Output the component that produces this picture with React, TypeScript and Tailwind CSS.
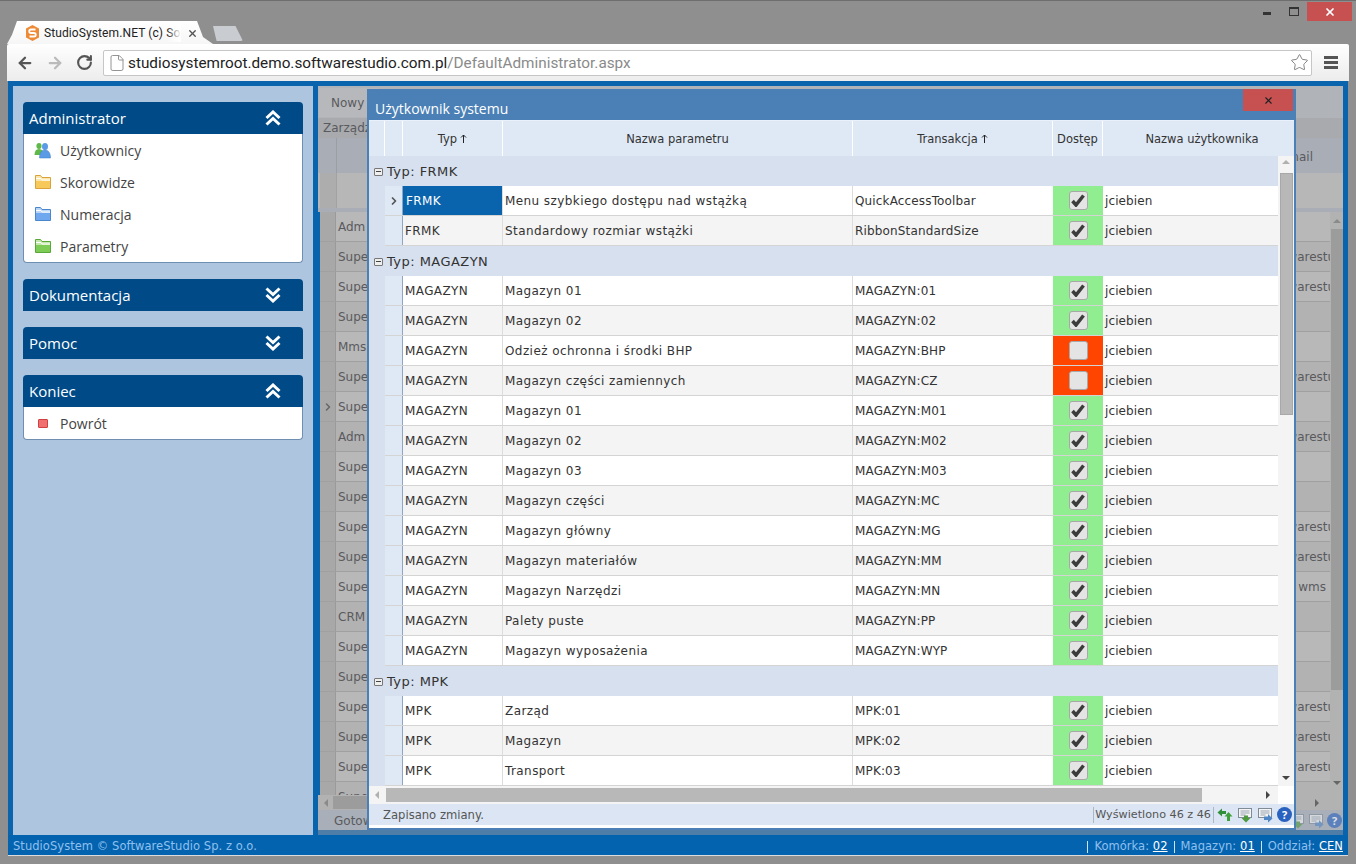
import { ArrowLeft, ArrowRight, ChevronRight, File, RotateCw, Star, X } from 'lucide-react';

const mono = "font-['DejaVu_Sans',sans-serif]";
const ui = "font-['Open_Sans',sans-serif]";
const chrome = "font-['Roboto',sans-serif]";

type Row = [string, string, string, boolean];

const groups: { name: string; rows: Row[] }[] = [
  {
    name: 'FRMK',
    rows: [
      ['FRMK', 'Menu szybkiego dostępu nad wstążką', 'QuickAccessToolbar', true],
      ['FRMK', 'Standardowy rozmiar wstążki', 'RibbonStandardSize', true],
    ],
  },
  {
    name: 'MAGAZYN',
    rows: [
      ['MAGAZYN', 'Magazyn 01', 'MAGAZYN:01', true],
      ['MAGAZYN', 'Magazyn 02', 'MAGAZYN:02', true],
      ['MAGAZYN', 'Odzież ochronna i środki BHP', 'MAGAZYN:BHP', false],
      ['MAGAZYN', 'Magazyn części zamiennych', 'MAGAZYN:CZ', false],
      ['MAGAZYN', 'Magazyn 01', 'MAGAZYN:M01', true],
      ['MAGAZYN', 'Magazyn 02', 'MAGAZYN:M02', true],
      ['MAGAZYN', 'Magazyn 03', 'MAGAZYN:M03', true],
      ['MAGAZYN', 'Magazyn części', 'MAGAZYN:MC', true],
      ['MAGAZYN', 'Magazyn główny', 'MAGAZYN:MG', true],
      ['MAGAZYN', 'Magazyn materiałów', 'MAGAZYN:MM', true],
      ['MAGAZYN', 'Magazyn Narzędzi', 'MAGAZYN:MN', true],
      ['MAGAZYN', 'Palety puste', 'MAGAZYN:PP', true],
      ['MAGAZYN', 'Magazyn wyposażenia', 'MAGAZYN:WYP', true],
    ],
  },
  {
    name: 'MPK',
    rows: [
      ['MPK', 'Zarząd', 'MPK:01', true],
      ['MPK', 'Magazyn', 'MPK:02', true],
      ['MPK', 'Transport', 'MPK:03', true],
    ],
  },
];

// rows of the dimmed list behind the dialog: left text, right text
const backRows: [string, string][] = [
  ['Adm', ''],
  ['Supe', 'softwarestudio'],
  ['Supe', 'softwarestudio'],
  ['Supe', ''],
  ['Mms', ''],
  ['Supe', 'softwarestudio'],
  ['Supe', ''],
  ['Adm', 'softwarestudio'],
  ['Supe', ''],
  ['Supe', ''],
  ['Supe', 'softwarestudio'],
  ['Supe', 'softwarestudio'],
  ['Supe', 'wms'],
  ['CRM', ''],
  ['Supe', ''],
  ['Supe', ''],
  ['Supe', 'softwarestudio'],
  ['Supe', 'softwarestudio'],
  ['Supe', 'softwarestudio'],
  ['Supe', ''],
];

function FolderIcon({ fill, light, stroke }: { fill: string; light: string; stroke: string }) {
  return (
    <svg width="16" height="14" viewBox="0 0 16 14" className="shrink-0">
      <path d="M0.5 13.500V0.500h5l1.500 2h8.500v11z" fill={light} stroke={stroke} />
      <path d="M1 3.500h5l1 1.500h8" fill="none" stroke="#ffffff" />
      <rect x="1" y="6" width="14" height="7" fill={fill} />
    </svg>
  );
}

function UsersIcon() {
  return (
    <svg width="17" height="17" viewBox="0 0 17 17" className="shrink-0">
      <ellipse cx="5" cy="4" rx="2.600" ry="3" fill="#5fb84a" />
      <path d="M0.500 13c0-4 1.500-6 4.500-6s4.500 2 4.500 6z" fill="#5fb84a" />
      <ellipse cx="11" cy="4.500" rx="3" ry="3.500" fill="#5b9be6" />
      <path d="M5.500 16c0-5 2-8 5.500-8s5.500 3 5.500 8z" fill="#5b9be6" stroke="#3e7cc8" strokeWidth="0.500" />
    </svg>
  );
}

function RefreshIcon() {
  return (
    <svg width="16" height="16" viewBox="0 0 16 16" className="shrink-0">
      <path d="M0.500 5.500L5 1.500v2.500h4v3H5v2.500z" fill="#2f8f3a" />
      <path d="M11.500 5l4 4.500H13V14h-3V9.500H7.500z" fill="#3f9f3a" />
    </svg>
  );
}

function PageDownIcon() {
  return (
    <svg width="16" height="16" viewBox="0 0 16 16" className="shrink-0">
      <rect x="1.500" y="1.500" width="13" height="9" fill="#f4f4f4" stroke="#7f8b96" />
      <path d="M3.500 4h9M3.500 6h9M3.500 8h5" stroke="#9aa5b1" />
      <path d="M7 8.500h4v2.500h2.500L9 15.500 4.500 11H7z" fill="#4f9a3f" />
    </svg>
  );
}

function PageRightIcon() {
  return (
    <svg width="16" height="16" viewBox="0 0 16 16" className="shrink-0">
      <rect x="1.500" y="1.500" width="13" height="9" fill="#f4f4f4" stroke="#7f8b96" />
      <path d="M3.500 4h9M3.500 6h9M3.500 8h5" stroke="#9aa5b1" />
      <path d="M7 9.500h4V7l4.500 4.500L11 15.500V13H7z" fill="#4f86c6" />
    </svg>
  );
}

function HelpIcon() {
  return (
    <div className={`flex h-[15px] w-[15px] shrink-0 items-center justify-center rounded-full bg-[#2a62c0] text-[11px] font-bold leading-none text-white ${ui}`}>
      ?
    </div>
  );
}

function DoubleChevron({ up }: { up: boolean }) {
  return (
    <svg width="16" height="16" viewBox="0 0 16 16" className={up ? '' : 'rotate-180'}>
      <path d="M1.500 8L8 2l6.500 6M1.500 14.500L8 8.500l6.500 6" fill="none" stroke="#ffffff" strokeWidth="3" />
    </svg>
  );
}

function Checkbox({ on }: { on: boolean }) {
  return (
    <div className="flex h-[19px] w-[19px] items-center justify-center rounded-[3px] border border-[#a8a8a8] bg-[#e4e4e4]">
      {on && (
        <svg width="14" height="13" viewBox="0 0 14 13">
          <path d="M1.500 7l3.500 4L12.500 1.500" fill="none" stroke="#3c3c3c" strokeWidth="3.500" />
        </svg>
      )}
    </div>
  );
}

function SidePanel({ title, open, children }: { title: string; open: boolean; children?: React.ReactNode }) {
  return (
    <div className="w-[280px]">
      <div className={`flex h-8 items-center justify-between rounded-t-[4px] bg-[#004b87] pl-[6px] pr-[22px] text-[15px] text-white ${ui}`}>
        <span className="pt-[1px]">{title}</span>
        <DoubleChevron up={open} />
      </div>
      {children && (
        <div className="rounded-b-[4px] border border-t-0 border-[#6f8fb0] bg-white">{children}</div>
      )}
    </div>
  );
}

function SideItem({ icon, label }: { icon: React.ReactNode; label: string }) {
  return (
    <div className={`flex h-8 items-center text-[14px] text-[#444] ${ui}`}>
      <div className="flex w-[36px] justify-center pl-[1px]">{icon}</div>
      <span>{label}</span>
    </div>
  );
}

function TabBar() {
  return (
    <div className="relative flex h-[43px] shrink-0 items-end pl-[7px]">
      <div className="relative flex h-[23px] w-[206px] items-center bg-gradient-to-b from-white to-[#f6f6f6] pl-[19px] pt-[1px] [clip-path:polygon(0_100%,5px_60%,10px_0,calc(100%-16px)_0,calc(100%-10px)_70%,100%_100%)]">
        <svg width="13" height="16" viewBox="0 0 13 16" className="shrink-0">
          <path d="M6.500 0L13 3.500v9L6.500 16 0 12.500v-9z" fill="#ee8a35" />
          <path d="M9.500 4.500H5a1.700 1.700 0 0 0 0 3.500h3a1.700 1.700 0 0 1 0 3.500H3.500" fill="none" stroke="#ffffff" strokeWidth="1.800" />
        </svg>
        <div className={`relative ml-[5px] w-[137px] overflow-hidden whitespace-nowrap text-[12px] tracking-[0.1px] text-[#222] ${chrome}`}>
          StudioSystem.NET (c) Software
          <div className="absolute inset-y-0 right-0 w-[14px] bg-gradient-to-r from-transparent to-white" />
        </div>
        <X size={11} strokeWidth={3} className="ml-[6px] text-[#555]" />
      </div>
      <div className="mb-[3px] h-[15px] w-[30px] rounded-b-[2px] bg-[#c9ccd0] [clip-path:polygon(0_0,75%_0,100%_100%,12%_100%)]" />
      {/* window buttons */}
      <div className="absolute right-[4px] top-[1px] flex items-start">
        <div className="mr-[18px] mt-[10px] h-[3px] w-[8px] bg-[#333]" />
        <div className="mr-[8px] mt-[5px] h-[9px] w-[10px] border border-t-2 border-[#333]" />
        <div className="flex h-[19px] w-[45px] items-center justify-center bg-[#c75050] text-white">
          <X size={12} strokeWidth={3.500} />
        </div>
      </div>
    </div>
  );
}

function Toolbar() {
  return (
    <div className="mx-[7px] flex h-[37px] shrink-0 items-center rounded-t-[2px] bg-gradient-to-b from-white to-[#ececec]">
      <ArrowLeft size={18} strokeWidth={3} className="ml-[9px] text-[#555]" />
      <ArrowRight size={18} strokeWidth={3} className="ml-[12px] text-[#bbb]" />
      <RotateCw size={17} strokeWidth={3} className="ml-[12px] text-[#555]" />
      <div className="ml-[10px] flex h-[26px] w-[1209px] items-center rounded-[2px] border border-[#c6c6c6] bg-white pl-[4px] pr-[2px]">
        <File size={18} strokeWidth={1.200} className="text-[#888]" />
        <div className={`ml-[2px] flex-1 pt-[1px] text-[15.300px] text-[#222] ${chrome}`}>
          studiosystemroot.demo.softwarestudio.com.pl<span className="text-[#8a8a8a]">/DefaultAdministrator.aspx</span>
        </div>
        <Star size={19} strokeWidth={1} className="text-[#666]" />
      </div>
      <div className="ml-[12px] flex w-[14px] flex-col gap-[2px]">
        <div className="h-[3px] bg-[#555]" />
        <div className="h-[3px] bg-[#555]" />
        <div className="h-[3px] bg-[#555]" />
      </div>
    </div>
  );
}

function Sidebar() {
  return (
    <div className="flex w-[300px] shrink-0 flex-col items-center gap-4 bg-[#aec5e0] pt-4">
      <SidePanel title="Administrator" open>
        <SideItem icon={<UsersIcon />} label="Użytkownicy" />
        <SideItem icon={<FolderIcon fill="#f6c95a" light="#fbe6ad" stroke="#d9a33a" />} label="Skorowidze" />
        <SideItem icon={<FolderIcon fill="#6fa8ee" light="#bcd6f6" stroke="#4a86cc" />} label="Numeracja" />
        <SideItem icon={<FolderIcon fill="#7dcc55" light="#c3e8ab" stroke="#5aa838" />} label="Parametry" />
      </SidePanel>
      <SidePanel title="Dokumentacja" open={false} />
      <SidePanel title="Pomoc" open={false} />
      <SidePanel title="Koniec" open>
        <SideItem
          icon={<div className="h-[9px] w-[10px] rounded-[1px] border border-[#d04040] bg-[#f07070]" />}
          label="Powrót"
        />
      </SidePanel>
    </div>
  );
}

// the list page that sits dimmed behind the dialog
function BackPage() {
  return (
    <div className={`flex h-full flex-col text-[12px] text-[#5a5a5e] ${mono}`}>
      <div className="flex h-[32px] shrink-0 bg-[#b0b3b7] pl-[1px] pt-[2px]">
        <div className="flex h-[29px] w-[60px] items-center bg-[#b6b8bb] pl-[12px]">Nowy</div>
      </div>
      <div className="flex h-[20px] shrink-0 items-center bg-[#a8aaae] pb-[1px] pl-[5px]">Zarządzanie</div>
      <div className="flex h-[35px] shrink-0 items-center justify-between bg-[#a9aeb6] pl-[2px]">
        <div className="h-full w-[17px] border-r border-[#9a9ea5]" />
        <span className="mr-[30px] mt-[2px]">nail</span>
      </div>
      <div className="h-[35px] shrink-0 bg-[#b7b7b7] pl-[2px]">
        <div className="h-full w-[17px] border-r border-[#a2a2a2] bg-[#adadad]" />
      </div>
      <div className="h-[4px] shrink-0 bg-[#a9aeb6]" />
      <div className="flex min-h-0 flex-1">
        <div className="min-w-0 flex-1 overflow-hidden pl-[2px]">
          {backRows.map((row, i) => (
            <div key={i} className={`flex h-[30px] items-center border-b border-[#a0a0a0] ${i % 2 ? 'bg-[#b2b2b2]' : 'bg-[#b8b8b8]'}`}>
              <div className="relative flex h-full w-[16px] items-center justify-center border-r border-[#9a9a9a] bg-[#a8a8a8]">
                {i === 6 && <ChevronRight size={12} strokeWidth={3} className="text-[#666]" />}
              </div>
              <span className="ml-[2px]">{row[0]}</span>
              <div className="ml-auto w-[70px] overflow-hidden whitespace-nowrap text-right">
                {row[1] === 'wms' && <span className="pr-[4px]">wms</span>}
                {row[1] !== 'wms' && row[1] && <span className="ml-[5px] block text-left">{row[1]}</span>}
              </div>
            </div>
          ))}
        </div>
        <div className="flex w-[13px] shrink-0 flex-col items-center bg-[#b2b2b2]">
          <div className="mt-[7px] h-0 w-0 border-x-[4px] border-b-[4px] border-x-transparent border-b-[#8a8a8a]" />
          <div className="mt-[6px] h-[461px] w-[12px] bg-[#9c9c9c]" />
          <div className="mt-auto mb-[10px] h-0 w-0 border-x-[4px] border-t-[4px] border-x-transparent border-t-[#666]" />
        </div>
      </div>
      <div className="flex h-[15px] shrink-0 items-center bg-[#b2b2b2] pl-[6px]">
        <div className="h-0 w-0 border-y-[4px] border-r-[4px] border-y-transparent border-r-[#8a8a8a]" />
        <div className="ml-[5px] h-[13px] w-[960px] bg-[#9c9c9c]" />
        <div className="ml-auto mr-[24px] h-0 w-0 border-y-[4px] border-l-[4px] border-y-transparent border-l-[#666]" />
      </div>
      <div className="flex h-[20px] shrink-0 items-center bg-[#a8afb8] pl-[16px] pt-[1px]">
        <span>Gotowy</span>
        <div className="ml-auto flex items-center gap-[3px] pr-[1px] opacity-60">
          <PageDownIcon />
          <PageRightIcon />
          <HelpIcon />
        </div>
      </div>
      <div className="h-[5px] shrink-0 bg-[#4e7da8]" />
    </div>
  );
}

function DataRow({ row, selected, alt }: { row: Row; selected: boolean; alt: boolean }) {
  return (
    <div className="flex h-[30px]">
      <div className="w-[16px] shrink-0 bg-[#d6e0ef]" />
      <div className={`flex flex-1 border-b border-[#d4d4d4] ${alt ? 'bg-[#f4f4f4]' : 'bg-white'}`}>
        <div className="flex w-[18px] shrink-0 items-center justify-center border-r border-[#8ea6c0] bg-[#dfe8f5]">
          {selected && <ChevronRight size={12} strokeWidth={3.500} className="text-[#555]" />}
        </div>
        <div className={`flex w-[100px] shrink-0 items-center border-r border-[#dcdcdc] tracking-[0.4px] ${selected ? 'bg-[#0a64ad] pl-[3px] text-white' : 'pl-[2px]'}`}>
          {row[0]}
        </div>
        <div className="flex w-[350px] shrink-0 items-center border-r border-[#dcdcdc] pl-[2px] tracking-[0.42px]">{row[1]}</div>
        <div className="flex w-[200px] shrink-0 items-center pl-[2px] tracking-[0.15px]">{row[2]}</div>
        <div className={`flex w-[50px] shrink-0 items-center justify-center ${row[3] ? 'bg-[#90ee90]' : 'bg-[#ff4500]'}`}>
          <Checkbox on={row[3]} />
        </div>
        <div className="flex flex-1 items-center pl-[2px] tracking-[0.1px]">jciebien</div>
      </div>
    </div>
  );
}

function HeaderCell({ w, label, sort }: { w: string; label?: string; sort?: boolean }) {
  return (
    <div className={`flex ${w} shrink-0 items-center justify-center border-r border-white pt-[3px]`}>
      {label}
      {sort && (
        <svg width="7" height="9" viewBox="0 0 7 9" className="mb-[3px] ml-[3px]">
          <path d="M3.500 9V1M1 3.500L3.500 1 6 3.500" fill="none" stroke="#222" />
        </svg>
      )}
    </div>
  );
}

function Dialog() {
  return (
    <div className={`absolute left-[49px] top-[3px] flex h-[741px] w-[929px] flex-col border-x-2 border-b-2 border-[#4a80b5] bg-white text-[12px] text-[#333] ${mono}`}>
      <div className={`relative flex h-[31px] shrink-0 items-end bg-[#4a80b5] pb-[1px] pl-[6px] text-[14px] text-white ${ui}`}>
        Użytkownik systemu
        <div className="absolute right-[1px] top-0 flex h-[22px] w-[50px] items-center justify-center bg-[#c75050] text-[#222]">
          <X size={11} strokeWidth={2.500} />
        </div>
      </div>
      <div className="flex h-[36px] shrink-0 border-t border-[#eaf1fa] bg-[#dfe9f6] text-[11.500px]">
        <HeaderCell w="w-[16px]" />
        <HeaderCell w="w-[18px]" />
        <HeaderCell w="w-[100px]" label="Typ" sort />
        <HeaderCell w="w-[350px]" label="Nazwa parametru" />
        <HeaderCell w="w-[200px]" label="Transakcja" sort />
        <HeaderCell w="w-[50px]" label="Dostęp" />
        <div className="flex flex-1 items-center justify-center pl-[7px] pt-[3px]">Nazwa użytkownika</div>
      </div>
      <div className="flex h-[630px] shrink-0 overflow-hidden">
        <div className="min-w-0 flex-1">
          {groups.map((g, gi) => (
            <div key={g.name}>
              <div className="flex h-[30px] items-center bg-[#d6e0ef] pl-[5px] pt-[1px] text-[13px] tracking-[0.45px] text-[#333]">
                <div className="flex h-[8px] w-[9px] items-center justify-center rounded-[1px] border border-[#777] bg-[#eee]">
                  <div className="h-[1px] w-[5px] bg-[#444]" />
                </div>
                <span className="ml-[4px]">Typ: {g.name}</span>
              </div>
              {g.rows.map((row, i) => (
                <DataRow key={row[2]} row={row} selected={gi === 0 && i === 0} alt={i % 2 === 1} />
              ))}
            </div>
          ))}
        </div>
        <div className="flex w-[16px] shrink-0 flex-col items-center bg-[#f4f4f4]">
          <div className="mt-[4px] h-0 w-0 border-x-[4px] border-b-[4px] border-x-transparent border-b-[#b0b0b0]" />
          <div className="mt-[9px] h-[242px] w-[13px] border border-[#a8a8a8] bg-[#b8b8b8]" />
          <div className="mt-auto mb-[6px] h-0 w-0 border-x-[4px] border-t-[4px] border-x-transparent border-t-[#444]" />
        </div>
      </div>
      <div className="flex h-[18px] shrink-0 items-center bg-[#f4f4f4] pl-[6px]">
        <div className="h-0 w-0 border-y-[4px] border-r-[4px] border-y-transparent border-r-[#b0b0b0]" />
        <div className="ml-[7px] h-[14px] w-[816px] bg-[#b8b8b8]" />
        <div className="ml-[64px] h-0 w-0 border-y-[4px] border-l-[4px] border-y-transparent border-l-[#444]" />
        <div className="ml-auto h-full w-[16px] bg-white" />
      </div>
      <div className="flex h-[21px] shrink-0 items-center bg-[#dbe5f3] pl-[14px] text-[11.600px] text-[#555]">
        <span className="pt-[2px]">Zapisano zmiany.</span>
        <div className="ml-auto flex h-full items-center pr-[2px]">
          <div className="h-[16px] border-l border-[#a9b7c7] pl-[1px] text-[11.200px]">Wyświetlono 46 z 46</div>
          <div className="ml-[2px] mr-[3px] h-[16px] border-l border-[#a9b7c7]" />
          <div className="flex items-center gap-[4px]">
            <RefreshIcon />
            <PageDownIcon />
            <PageRightIcon />
            <HelpIcon />
          </div>
        </div>
      </div>
    </div>
  );
}

function StatusBar() {
  return (
    <div className={`flex h-[20px] shrink-0 items-center justify-between bg-[#0463ae] px-[5px] pt-[3px] text-[11.500px] tracking-[0.05px] text-[#8fc0ee] ${mono}`}>
      <span>StudioSystem © SoftwareStudio Sp. z o.o.</span>
      <div className="flex items-center gap-[6px]">
        <span className="h-[12px] border-l border-[#cfe3f6]" />
        <span>Komórka: <span className="text-white underline">02</span></span>
        <span className="h-[12px] border-l border-[#cfe3f6]" />
        <span>Magazyn: <span className="text-white underline">01</span></span>
        <span className="h-[12px] border-l border-[#cfe3f6]" />
        <span>Oddział: <span className="text-white underline">CEN</span></span>
      </div>
    </div>
  );
}

export default function App() {
  return (
    <div className="flex h-[864px] w-[1356px] flex-col overflow-hidden border-t border-[#6e6e6e] bg-[#8f8f8f]">
      <TabBar />
      <Toolbar />
      <div className="mx-[8px] flex h-[774px] shrink-0 flex-col bg-[#0a64ad]">
        <div className="flex min-h-0 flex-1 gap-[5px] px-[5px] pt-[5px]">
          <Sidebar />
          <div className="relative min-w-0 flex-1">
            <BackPage />
            <Dialog />
          </div>
        </div>
        <StatusBar />
      </div>
      <div className="mx-[8px] h-[1px] bg-[#dcdcdc]" />
    </div>
  );
}
